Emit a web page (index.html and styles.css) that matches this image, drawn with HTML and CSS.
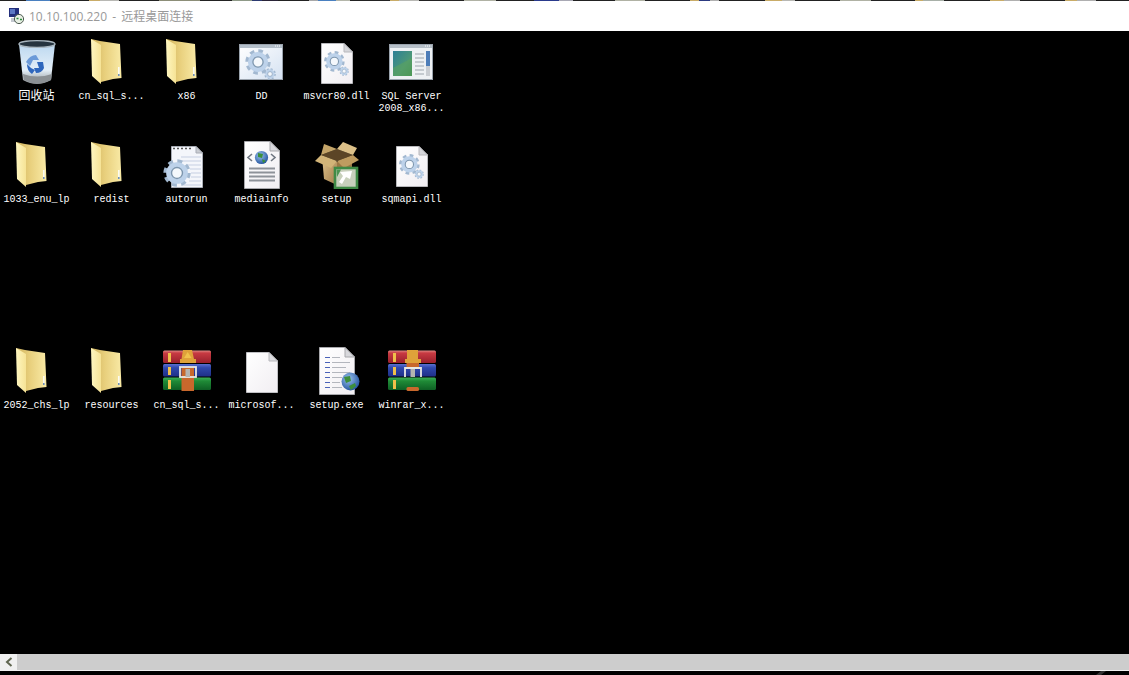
FILE: index.html
```html
<!DOCTYPE html>
<html lang="zh-CN">
<head>
    <meta charset="UTF-8">
    <meta name="viewport" content="width=device-width, initial-scale=1.0">
    <title>10.10.100.220 - 远程桌面连接</title>
    <link rel="stylesheet" href="styles.css">
</head>
<body>
    <svg class="sprite" aria-hidden="true">
        <defs>
            <linearGradient id="folderBack" x1="0" y1="0" x2="1" y2="0">
                <stop offset="0" stop-color="#cfb25c"/>
                <stop offset="0.45" stop-color="#e8cf7c"/>
                <stop offset="1" stop-color="#f9eaa6"/>
            </linearGradient>
            <linearGradient id="folderFlap" x1="0" y1="0" x2="1" y2="0">
                <stop offset="0" stop-color="#fef6c0"/>
                <stop offset="1" stop-color="#f6e396"/>
            </linearGradient>
            <linearGradient id="glass" x1="0" y1="0" x2="0" y2="1">
                <stop offset="0" stop-color="#bcd8f0"/>
                <stop offset="0.65" stop-color="#e4eff8"/>
                <stop offset="1" stop-color="#8d9296"/>
            </linearGradient>
            <linearGradient id="paper" x1="0" y1="0" x2="1" y2="1">
                <stop offset="0" stop-color="#ffffff"/>
                <stop offset="1" stop-color="#f1eef2"/>
            </linearGradient>
            <linearGradient id="pane" x1="0" y1="0" x2="1" y2="1">
                <stop offset="0" stop-color="#ffffff"/>
                <stop offset="1" stop-color="#d5e2f2"/>
            </linearGradient>
            <linearGradient id="photo" x1="0" y1="0" x2="1" y2="1">
                <stop offset="0" stop-color="#2c7f96"/>
                <stop offset="0.6" stop-color="#4c9878"/>
                <stop offset="1" stop-color="#3b8a4c"/>
            </linearGradient>
            <linearGradient id="boxSide" x1="0" y1="0" x2="1" y2="1">
                <stop offset="0" stop-color="#e0c48e"/>
                <stop offset="1" stop-color="#a07c4a"/>
            </linearGradient>
            <linearGradient id="bookRed" x1="0" y1="0" x2="0" y2="1">
                <stop offset="0" stop-color="#e08a84"/>
                <stop offset="0.2" stop-color="#c83a42"/>
                <stop offset="1" stop-color="#98202c"/>
            </linearGradient>
            <linearGradient id="bookBlue" x1="0" y1="0" x2="0" y2="1">
                <stop offset="0" stop-color="#5a70d0"/>
                <stop offset="0.3" stop-color="#2f48ac"/>
                <stop offset="1" stop-color="#1e2f88"/>
            </linearGradient>
            <linearGradient id="bookGreen" x1="0" y1="0" x2="0" y2="1">
                <stop offset="0" stop-color="#3cb058"/>
                <stop offset="0.3" stop-color="#1f8a36"/>
                <stop offset="1" stop-color="#0e5f24"/>
            </linearGradient>
            <radialGradient id="globe" cx="0.4" cy="0.35" r="0.7">
                <stop offset="0" stop-color="#9cc4ee"/>
                <stop offset="1" stop-color="#1f4f9c"/>
            </radialGradient>

            <symbol id="i-folder" viewBox="0 0 48 48">
                <path d="M3 1 L12 3 L32 6 L33.5 40 L25 41 L13 44 Z" fill="url(#folderBack)"/>
                <path d="M3 1 L13 7 L13 46 L4 38 Z" fill="url(#folderFlap)"/>
                <rect x="30" y="29" width="1.6" height="9" fill="#fbfbf2"/>
                <rect x="30" y="36" width="1.6" height="2" fill="#6d8fb8"/>
            </symbol>

            <symbol id="i-bin" viewBox="0 0 48 48">
                <path d="M6 6 L10 42 Q24 50 38 42 L42 6 Z" fill="url(#glass)"/>
                <ellipse cx="24" cy="6" rx="18" ry="3.4" fill="#26343f" stroke="#a9b6bf" stroke-width="1.4"/>
                <path d="M10 36 Q24 41 39 36 L38 42 Q24 49 11 42 Z" fill="#8b9094"/>
                <path d="M13 24 Q17 17 23 17 L26 22 L20 22 L17 28 Z" fill="#6b9ad8"/>
                <path d="M14 26 L18 30 L22 32 L19 36 Q14 33 14 26 Z" fill="#2f67bd"/>
                <path d="M24 24 L30 24 L31 30 Q29 35 23 35 L21 30 L26 30 Z" fill="#2f67bd"/>
            </symbol>

            <symbol id="i-gear" viewBox="0 0 24 24">
                <circle cx="12" cy="12" r="9.6" fill="none" stroke="#a2b8d0" stroke-width="4.2" stroke-dasharray="4 3.54"/>
                <circle cx="12" cy="12" r="7" fill="none" stroke="#bdd2ea" stroke-width="4.6"/>
                <circle cx="12" cy="12" r="4.7" fill="#f4f8fc" stroke="#7d96ae" stroke-width="1.2"/>
            </symbol>

            <symbol id="i-gears" viewBox="0 0 32 32">
                <use href="#i-gear" x="1" y="1" width="26" height="26"/>
                <use href="#i-gear" x="20" y="20" width="12" height="12"/>
            </symbol>

            <symbol id="i-window-gear" viewBox="0 0 48 48">
                <rect x="1.5" y="6.5" width="43" height="35" fill="url(#pane)" stroke="#9aa3ad"/>
                <rect x="2" y="7" width="42" height="3" fill="#b4bfca"/>
                <path d="M37 8h1M39 8h1M41 8h1" stroke="#fff"/>
                <use href="#i-gears" x="6" y="10" width="32" height="32"/>
            </symbol>

            <symbol id="i-doc-gear" viewBox="0 0 48 48">
                <path d="M8.5 5.5 H31 L39.5 14 V45.5 H8.5 Z" fill="url(#paper)" stroke="#b8b8bc"/>
                <path d="M31 5.5 V14 H39.5 Z" fill="#d6d6da" stroke="#b8b8bc"/>
                <use href="#i-gears" x="10" y="12" width="26" height="26"/>
            </symbol>

            <symbol id="i-sql" viewBox="0 0 48 48">
                <rect x="1.5" y="6.5" width="43" height="35" fill="#eef1f4" stroke="#9aa3ad"/>
                <rect x="2" y="7" width="42" height="3" fill="#b6bfc8"/>
                <path d="M37 8h1M39 8h1M41 8h1" stroke="#fff"/>
                <rect x="5" y="13" width="19" height="25" fill="url(#photo)"/>
                <path d="M5 30 L24 20 V38 H5 Z" fill="#5aa25f" opacity="0.6"/>
                <path d="M27 16h9M27 20h9M27 24h9M27 28h9M27 32h9M27 36h9" stroke="#b8bec4" stroke-width="1.4"/>
                <rect x="38" y="13" width="4" height="15" fill="#4d7db8"/>
                <rect x="38" y="28" width="4" height="10" fill="#c9cdd2"/>
            </symbol>

            <symbol id="i-autorun" viewBox="0 0 48 48">
                <path d="M8.5 5.5 H33 L39.5 12 V46.5 H8.5 Z" fill="#f4f6fb" stroke="#a9adb6"/>
                <path d="M33 5.5 V12 H39.5 Z" fill="#c9ccd2" stroke="#a9adb6"/>
                <path d="M10 7.5h20" stroke="#555" stroke-width="1.6" stroke-dasharray="2 2"/>
                <path d="M18 16h20M18 20h20M24 24h14M27 28h11M28 32h10M28 36h10M26 40h12M18 44h20" stroke="#c6cfe2"/>
                <use href="#i-gear" x="0" y="18" width="28" height="28"/>
            </symbol>

            <symbol id="i-mediainfo" viewBox="0 0 48 48">
                <path d="M6.5 .5 H32 L41.5 10 V47.5 H6.5 Z" fill="url(#paper)" stroke="#a8a8ac"/>
                <path d="M32 .5 V10 H41.5 Z" fill="#d8d8dc" stroke="#a8a8ac"/>
                <circle cx="23.5" cy="16.5" r="6.6" fill="url(#globe)"/>
                <path d="M20 12 L25 13 L24 17 L20 16 Z M24 18 L28 20 L25 22 Z" fill="#3d8f3a"/>
                <path d="M14 13 L10 16.5 L14 20 M33 13 L37 16.5 L33 20" fill="none" stroke="#6f7680" stroke-width="1.6"/>
                <path d="M11 27.5h26M11 31.5h26M11 35.5h26M11 39.5h26" stroke="#8e9299" stroke-width="2"/>
            </symbol>

            <symbol id="i-setup" viewBox="0 0 48 48">
                <path d="M8 14 L24 20 L40 14 L24 8 Z" fill="#5c4526"/>
                <path d="M9 15 L24 21 V44 L11 38 Z" fill="url(#boxSide)"/>
                <path d="M24 21 L39 15 V36 L24 44 Z" fill="#9c7844"/>
                <path d="M8 14 L2 20 L18 27 L24 20 Z" fill="#d2b478"/>
                <path d="M8 14 L11 3 L24 8 Z" fill="#c4a468"/>
                <path d="M24 8 L30 1 L44 7 L40 14 Z" fill="#dcc088"/>
                <path d="M40 14 L46 19 L31 27 L24 20 Z" fill="#bf9c60"/>
                <rect x="22" y="27" width="22" height="20" fill="#c8d0bc" stroke="#3f8a45" stroke-width="2.6"/>
                <path d="M27 31 L39 30 L37 38 L33 36 L29 43 L26 41 L30 35 Z" fill="#fff"/>
                <path d="M23.5 28.5 H28 L24 36 Z" fill="#4a9350"/>
            </symbol>

            <symbol id="i-rar" viewBox="0 0 48 48">
                <rect x="0" y="3.5" width="48" height="12.6" rx="1.5" fill="url(#bookRed)"/>
                <rect x="0" y="17" width="48" height="12.6" rx="1.5" fill="url(#bookBlue)"/>
                <rect x="0" y="30.4" width="48" height="12.6" rx="1.5" fill="url(#bookGreen)"/>
                <rect x="5" y="6" width="3" height="9" fill="#efc04a"/>
                <rect x="5" y="20" width="3" height="8" fill="#efc04a"/>
                <rect x="5" y="33" width="3" height="9" fill="#efc04a"/>
                <rect x="18.5" y="20" width="12.5" height="24" fill="#c8682c"/>
                <path d="M20 3 H29 L31 12 H33 V16 H17 V12 H18.5 Z" fill="#dfa23a"/>
                <path d="M24.7 5 L28.5 11 H21 Z" fill="#f0c24c"/>
                <rect x="17" y="20" width="16" height="10" fill="none" stroke="#e8e8e4" stroke-width="1.8"/>
                <rect x="22.5" y="22" width="4.5" height="8" fill="#b4b4b0"/>
            </symbol>

            <symbol id="i-rar-open" viewBox="0 0 48 48">
                <rect x="0" y="3.5" width="48" height="12.6" rx="1.5" fill="url(#bookRed)"/>
                <rect x="0" y="17" width="48" height="12.6" rx="1.5" fill="url(#bookBlue)"/>
                <rect x="0" y="30.4" width="48" height="12.6" rx="1.5" fill="url(#bookGreen)"/>
                <rect x="5" y="6" width="3" height="9" fill="#efc04a"/>
                <rect x="5" y="20" width="3" height="8" fill="#efc04a"/>
                <rect x="5" y="33" width="3" height="9" fill="#efc04a"/>
                <path d="M19 3 H30 V12 H33 V16 H17 V12 H19 Z" fill="#dfa23a"/>
                <rect x="18.5" y="16" width="12.5" height="6" fill="#c8682c"/>
                <rect x="18.5" y="40" width="12.5" height="4" rx="1.5" fill="#c8682c"/>
                <path d="M17 30 V21 H33 V30" fill="none" stroke="#e8e8e4" stroke-width="1.8"/>
                <rect x="22.5" y="22" width="4.5" height="8" fill="#b4b4b0"/>
            </symbol>

            <symbol id="i-blank" viewBox="0 0 48 48">
                <path d="M8.5 5.5 H31 L39.5 14 V45.5 H8.5 Z" fill="url(#paper)" stroke="#c0c0c4"/>
                <path d="M31 5.5 V14 H39.5 Z" fill="#dcdce0" stroke="#b8b8bc"/>
            </symbol>

            <symbol id="i-setup-exe" viewBox="0 0 48 48">
                <path d="M6.5 .5 H32 L41.5 10 V47.5 H6.5 Z" fill="url(#paper)" stroke="#a8a8ac"/>
                <path d="M32 .5 V10 H41.5 Z" fill="#d8d8dc" stroke="#a8a8ac"/>
                <path d="M12 10.5h5M12 15.5h5M12 20.5h5M12 25.5h5M12 30.5h5M12 35.5h5M12 40.5h5" stroke="#4a62b8" stroke-width="1.2"/>
                <path d="M19 10.5h8M19 15.5h18M19 20.5h14M19 25.5h18M19 30.5h10M19 35.5h8M19 40.5h10" stroke="#b3b6bd" stroke-width="1.2"/>
                <circle cx="37.5" cy="34.5" r="9" fill="url(#globe)"/>
                <path d="M31 30 L37 29 L38 34 L33 36 Z M36 39 L42 36 L43 39 L38 43 Z" fill="#3d8f3a"/>
            </symbol>
        </defs>
    </svg>

    <div class="top-strip"></div>

    <header class="titlebar">
        <svg class="app-icon" viewBox="0 0 16 16">
            <rect x="1" y="0" width="10" height="9" fill="#232f7c"/>
            <rect x="2" y="1" width="5" height="5" fill="#5c78c4"/>
            <rect x="3" y="10" width="7" height="4" fill="#c4c8d0"/>
            <circle cx="11" cy="11" r="4.6" fill="#e8efe4" stroke="#4c5a50"/>
            <path d="M8.5 10.5h2M12 11.5h2" stroke="#2b8b3a" stroke-width="1.4"/>
        </svg>
        <span class="title-text">10.10.100.220 - 远程桌面连接</span>
    </header>

    <main class="desktop">
        <div class="icon"><svg><use href="#i-bin"/></svg><span class="label label-cjk">回收站</span></div>
        <div class="icon"><svg><use href="#i-folder"/></svg><span class="label">cn_sql_s...</span></div>
        <div class="icon"><svg><use href="#i-folder"/></svg><span class="label">x86</span></div>
        <div class="icon"><svg><use href="#i-window-gear"/></svg><span class="label">DD</span></div>
        <div class="icon"><svg><use href="#i-doc-gear"/></svg><span class="label">msvcr80.dll</span></div>
        <div class="icon"><svg><use href="#i-sql"/></svg><span class="label">SQL Server 2008_x86...</span></div>

        <div class="icon"><svg><use href="#i-folder"/></svg><span class="label">1033_enu_lp</span></div>
        <div class="icon"><svg><use href="#i-folder"/></svg><span class="label">redist</span></div>
        <div class="icon"><svg><use href="#i-autorun"/></svg><span class="label">autorun</span></div>
        <div class="icon"><svg><use href="#i-mediainfo"/></svg><span class="label">mediainfo</span></div>
        <div class="icon"><svg><use href="#i-setup"/></svg><span class="label">setup</span></div>
        <div class="icon"><svg><use href="#i-doc-gear"/></svg><span class="label">sqmapi.dll</span></div>

        <div class="icon row-three"><svg><use href="#i-folder"/></svg><span class="label">2052_chs_lp</span></div>
        <div class="icon row-three"><svg><use href="#i-folder"/></svg><span class="label">resources</span></div>
        <div class="icon row-three"><svg><use href="#i-rar"/></svg><span class="label">cn_sql_s...</span></div>
        <div class="icon row-three"><svg><use href="#i-blank"/></svg><span class="label">microsof...</span></div>
        <div class="icon row-three"><svg><use href="#i-setup-exe"/></svg><span class="label">setup.exe</span></div>
        <div class="icon row-three"><svg><use href="#i-rar-open"/></svg><span class="label">winrar_x...</span></div>
    </main>

    <div class="scrollbar">
        <div class="scroll-btn">
            <svg viewBox="0 0 8 10" width="8" height="10"><path d="M6.5 1 L2 5 L6.5 9" fill="none" stroke="#606650" stroke-width="2"/></svg>
        </div>
        <div class="scroll-track"></div>
    </div>
    <div class="bottom-edge">
        <svg viewBox="0 0 10 4" width="10" height="4"><path d="M5 0 H10 L5 4 H0 Z" fill="#333"/></svg>
    </div>
</body>
</html>
```

FILE: styles.css
```css
html, body {
    height: 100%;
    margin: 0;
}

body {
    display: flex;
    flex-direction: column;
    background-color: #000;
    overflow: hidden;
}

.sprite {
    display: block;
    width: 0;
    height: 0;
}

/* 1px of the page behind the window, still showing at the top */
.top-strip {
    height: 1px;
    background-color: #222;
    background-image: linear-gradient(to right,
        #222 26px, #4a80c0 26px, #4a80c0 50px, #222 50px,
        #222 89px, #c9ac68 89px, #c9ac68 100px, #b8b8b4 100px, #b8b8b4 119px, #222 119px,
        #222 159px, #8c8e78 159px, #8c8e78 200px, #222 200px,
        #222 232px, #8f9a88 232px, #8f9a88 252px, #2c3a70 252px, #2c3a70 262px, #2a2438 262px, #2a2438 278px, #222 278px,
        #222 309px, #a8a8a8 309px, #a8a8a8 318px, #4a80c0 318px, #4a80c0 336px, #b4b6aa 336px, #b4b6aa 350px, #222 350px,
        #222 390px, #c9ac68 390px, #c9ac68 399px, #b8b8b4 399px, #b8b8b4 419px, #222 419px,
        #222 464px, #b0b2a4 464px, #b0b2a4 496px, #222 496px,
        #222 534px, #2a3a8c 534px, #2a3a8c 559px, #a8a8b4 559px, #a8a8b4 573px, #222 573px,
        #222 615px, #b0b2a4 615px, #b0b2a4 645px, #222 645px,
        #222 690px, #c9ac68 690px, #c9ac68 699px, #2c3a80 699px, #2c3a80 710px, #b0b0b0 710px, #b0b0b0 719px, #222 719px,
        #222 765px, #c9ac68 765px, #c9ac68 782px, #b8b8b4 782px, #b8b8b4 795px, #222 795px,
        #222 840px, #b0b2a4 840px, #b0b2a4 871px, #222 871px,
        #222 915px, #c9ac68 915px, #c9ac68 923px, #a8b0a8 923px, #a8b0a8 944px, #222 944px,
        #222 990px, #c9ac68 990px, #c9ac68 1004px, #b0b0b0 1004px, #b0b0b0 1020px, #222 1020px,
        #222 1065px, #c9ac68 1065px, #c9ac68 1077px, #b0b0b0 1077px, #b0b0b0 1096px, #222 1096px);
}

.titlebar {
    display: flex;
    align-items: center;
    gap: 5px;
    height: 30px;
    padding-left: 8px;
    background-color: #fff;
}

.app-icon {
    width: 16px;
    height: 16px;
}

.title-text {
    font-family: "Open Sans", "Noto Sans CJK SC", sans-serif;
    font-size: 12px;
    word-spacing: 2px;
    color: #999;
}

.desktop {
    flex: 1;
    display: grid;
    grid-template-columns: repeat(6, 75px);
    grid-auto-rows: 103px;
    margin-left: -1px;
    padding-top: 7px;
    min-height: 0;
}

.icon {
    display: flex;
    flex-direction: column;
    align-items: center;
    gap: 5px;
}

.icon svg {
    display: block;
    width: 48px;
    height: 48px;
    flex-shrink: 0;
}

/* the third row of icons sits one empty row further down */
.row-three {
    grid-row: 4;
}

.label {
    width: 75px;
    font-family: "Liberation Mono", "Noto Sans CJK SC", monospace;
    font-size: 10px;
    line-height: 12px;
    text-align: center;
    color: #fff;
}

.label-cjk {
    font-size: 12px;
}

.scrollbar {
    display: flex;
    height: 16px;
    border-bottom: 1px solid #f0f0f0;
}

.scroll-btn {
    display: flex;
    align-items: center;
    justify-content: center;
    width: 17px;
    background-color: #f0f0f0;
}

.scroll-track {
    flex: 1;
    background-color: #cdcdcd;
}

.bottom-edge {
    display: flex;
    justify-content: flex-end;
    height: 4px;
    padding-right: 23px;
}
```
